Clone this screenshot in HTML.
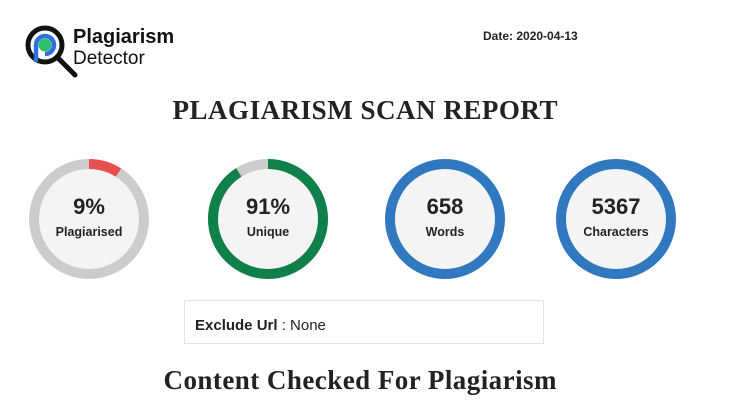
<!DOCTYPE html>
<html><head><meta charset="utf-8"><style>
body{margin:0;width:755px;height:411px;background:#fff;overflow:hidden;font-family:"Liberation Sans",sans-serif;color:#222}
</style></head><body>
<svg width="755" height="411" xmlns="http://www.w3.org/2000/svg" style="position:absolute;left:0;top:0">
<!-- logo -->
<circle cx="45" cy="45" r="17" fill="#fff" stroke="#111" stroke-width="5"/>
<path d="M36 62 V45 A9 9 0 1 1 45 54" fill="none" stroke="#2f6fe0" stroke-width="4.5"/>
<circle cx="45" cy="45" r="6.5" fill="#2fbf6a"/>
<line x1="58" y1="58" x2="75" y2="75" stroke="#111" stroke-width="5" stroke-linecap="round"/>
<text x="73" y="43" font-size="20" font-weight="bold" fill="#111">Plagiarism</text>
<text x="73" y="64" font-size="19" fill="#111">Detector</text>
<text x="483" y="40" font-size="12" font-weight="bold" fill="#222">Date: 2020-04-13</text>
<text x="365" y="119" text-anchor="middle" font-family="Liberation Serif" font-size="27" font-weight="bold" fill="#222" textLength="385">PLAGIARISM SCAN REPORT</text>
<!-- circles -->
<g font-weight="bold" text-anchor="middle" fill="#222">
<circle cx="89" cy="219" r="55" fill="#f4f4f4" stroke="#cccccc" stroke-width="10"/>
<circle cx="89" cy="219" r="55" fill="none" stroke="#e85050" stroke-width="10" stroke-dasharray="31.1 400" transform="rotate(-90 89 219)"/>
<text x="89" y="214" font-size="22">9%</text><text x="89" y="236" font-size="12.5">Plagiarised</text>
<circle cx="268" cy="219" r="55" fill="#f4f4f4" stroke="#cccccc" stroke-width="10"/>
<circle cx="268" cy="219" r="55" fill="none" stroke="#10804a" stroke-width="10" stroke-dasharray="314.5 400" transform="rotate(-90 268 219)"/>
<text x="268" y="214" font-size="22">91%</text><text x="268" y="236" font-size="12.5">Unique</text>
<circle cx="445" cy="219" r="55" fill="#f4f4f4" stroke="#3079c0" stroke-width="10"/>
<text x="445" y="214" font-size="22">658</text><text x="445" y="236" font-size="12.5">Words</text>
<circle cx="616" cy="219" r="55" fill="#f4f4f4" stroke="#3079c0" stroke-width="10"/>
<text x="616" y="214" font-size="22">5367</text><text x="616" y="236" font-size="12.5">Characters</text>
</g>
<rect x="184.5" y="300.5" width="359" height="43" fill="#fff" stroke="#e2e2e8"/>
<text x="195" y="330" font-size="15" fill="#222"><tspan font-weight="bold">Exclude Url</tspan> : None</text>
<text x="360" y="389" text-anchor="middle" font-family="Liberation Serif" font-size="27" font-weight="bold" fill="#222" textLength="393">Content Checked For Plagiarism</text>
</svg>
</body></html>
